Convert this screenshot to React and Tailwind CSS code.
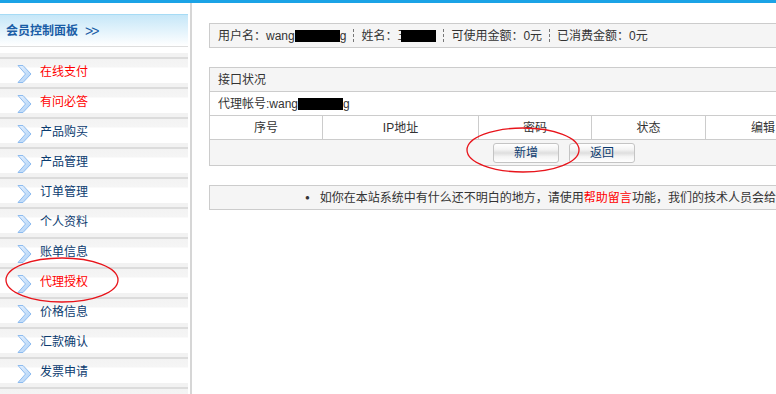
const menu = [
  { name: "在线支付", red: true },
  { name: "有问必答", red: true },
  { name: "产品购买" },
  { name: "产品管理" },
  { name: "订单管理" },
  { name: "个人资料" },
  { name: "账单信息" },
  { name: "代理授权", red: true },
  { name: "价格信息" },
  { name: "汇款确认" },
  { name: "发票申请" },
  { name: "" },
];

function Chevron() {
  return (
    <svg width="15" height="18" viewBox="0 0 15 18" className="shrink-0">
      <defs>
        <linearGradient id="chev" x1="0" y1="0" x2="1" y2="1">
          <stop offset="0" stopColor="#e6f1fd" />
          <stop offset="1" stopColor="#acd0f7" />
        </linearGradient>
      </defs>
      <polygon
        points="1,0.5 6,0.5 14,9 6,17.5 1,17.5 8.5,9"
        fill="url(#chev)"
        stroke="#8dbbef"
        strokeWidth="1"
      />
    </svg>
  );
}

function Sep() {
  return <span className="inline-block h-[13px] mx-[7px] border-l border-dashed border-[#777] align-middle" />;
}

function Redact({ w, className = "" }) {
  return <span className={`inline-block h-[12px] bg-black align-middle ${w} ${className}`} />;
}

export default function App() {
  return (
    <div
      className="relative w-[776px] h-[394px] overflow-hidden bg-white text-[12px] text-[#333]"
      style={{ fontFamily: '"Liberation Sans", "Noto Sans CJK SC", sans-serif' }}
    >
      <div className="h-[3px] bg-[#1ba3e6]" />
      <div className="flex">
        {/* Sidebar */}
        <div className="w-[192px] shrink-0 pr-[2px] border-r-2 border-[#d6d6d6] h-[391px]">
          <div className="h-[11px]" />
          <div className="h-[32px] border-t border-[#a6dbf5] bg-[linear-gradient(to_bottom,#c6e7f8,#ffffff)] flex items-center pl-[6px]">
            <span className="font-bold text-[#1a5da6] text-[12px]">会员控制面板</span>
            <span className="ml-[7px] text-[#1a5da6] text-[14px] leading-none tracking-[-2px]">&gt;&gt;</span>
          </div>
          <div className="h-[11px] border-t border-[#dedede] bg-[linear-gradient(to_bottom,#fff_0,#fff_6px,#f2f2f2_6px)]" />
          {menu.map((m, i) => (
            <div
              key={i}
              className="h-[30px] flex items-center pl-[17px] bg-[linear-gradient(to_bottom,#dcdcdc_0,#dcdcdc_2px,#f3f3f3_2px,#f5f5f5_10px,#fff_11px,#fff_26px,#f2f2f2_26px)]"
            >
              <div className="mt-[3px]">
                <Chevron />
              </div>
              <span className={`ml-[8px] ${m.red ? "text-[#ff0000]" : "text-[#0b3b6f]"}`}>{m.name}</span>
            </div>
          ))}
        </div>

        {/* Main */}
        <div className="pl-[17px] pt-[20px]">
          <div className="w-[640px] h-[25px] border border-[#cccccc] bg-[#f5f5f5] flex items-center pl-[8px] whitespace-nowrap">
            <span>用户名：wang</span>
            <Redact w="w-[45px]" />
            <span>g</span>
            <Sep />
            <span>姓名：王</span>
            <Redact w="w-[35px]" className="-ml-[8px]" />
            <Sep />
            <span>可使用金额：0元</span>
            <Sep />
            <span>已消费金额：0元</span>
          </div>

          <div className="mt-[19px] w-[640px] border border-[#cccccc]">
            <div className="h-[24px] bg-[#f5f5f5] flex items-center pl-[8px] border-b border-[#cccccc]">接口状况</div>
            <div className="h-[24px] flex items-center pl-[8px] border-b border-[#cccccc] whitespace-nowrap">
              <span>代理帐号:wang</span>
              <Redact w="w-[45px]" />
              <span>g</span>
            </div>
            <div className="h-[24px] flex border-b border-[#cccccc] text-center">
              <div className="w-[113px] flex items-center justify-center border-r border-[#cccccc]">序号</div>
              <div className="w-[156px] flex items-center justify-center border-r border-[#cccccc]">IP地址</div>
              <div className="w-[113px] flex items-center justify-center border-r border-[#cccccc]">密码</div>
              <div className="w-[114px] flex items-center justify-center border-r border-[#cccccc]">状态</div>
              <div className="w-[114px] flex items-center justify-center">编辑</div>
            </div>
            <div className="h-[25px] bg-[#f5f5f5] flex items-start pt-[3px] pl-[283px] gap-[10px]">
              {["新增", "返回"].map((b) => (
                <button
                  key={b}
                  className="w-[66px] h-[20px] rounded-[3px] border border-[#c4c4c4] text-[#0b3b6f] text-[12px] leading-none bg-[linear-gradient(to_bottom,#ffffff_0%,#f4f4f4_30%,#dedede_50%,#f4f4f4_70%,#ffffff_100%)]"
                >
                  {b}
                </button>
              ))}
            </div>
          </div>

          <div className="mt-[19px] w-[640px] h-[25px] border border-[#cccccc] bg-[#f5f5f5] flex items-center pl-[95px] whitespace-nowrap">
            <span className="text-[8px] mr-[10px]">●</span>
            <span>
              如你在本站系统中有什么还不明白的地方，请使用<span className="text-[#ff0000]">帮助留言</span>功能，我们的技术人员会给你解答。
            </span>
          </div>
        </div>
      </div>

      {/* red annotation ellipses */}
      <svg className="absolute left-0 top-0 pointer-events-none" width="776" height="394">
        <ellipse cx="62" cy="280" rx="56" ry="22" fill="none" stroke="#e8141b" strokeWidth="1.3" />
        <ellipse cx="523" cy="150" rx="56" ry="22" fill="none" stroke="#e8141b" strokeWidth="1.3" />
      </svg>
    </div>
  );
}
